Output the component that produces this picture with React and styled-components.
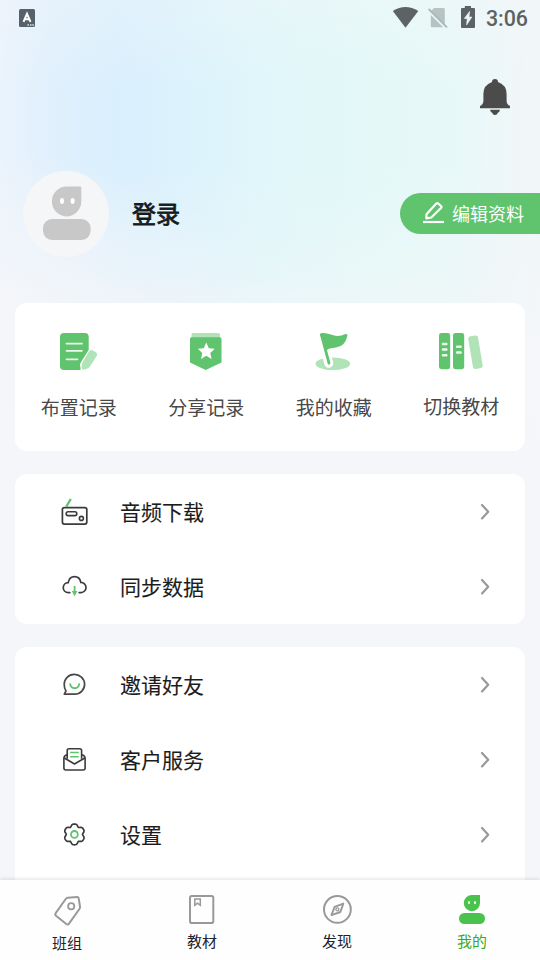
import React from "react";
import styled, { createGlobalStyle } from "styled-components";

const GlobalStyle = createGlobalStyle`
	* {
		box-sizing: border-box;
	}
	body {
		margin: 0;
		background: #f5f6f9;
		font-family: "Noto Sans CJK SC", sans-serif;
	}
	svg {
		display: block;
		flex-shrink: 0;
	}
`;

const Screen = styled.div`
	width: 540px;
	height: 960px;
	display: flex;
	flex-direction: column;
	overflow: hidden;
	background:
		radial-gradient(ellipse 260px 170px at 0 320px, rgba(245, 246, 249, 0.9), rgba(245, 246, 249, 0)),
		linear-gradient(
			to bottom,
			rgba(245, 246, 249, 0.3) 0,
			rgba(245, 246, 249, 0) 90px,
			rgba(245, 246, 249, 0) 160px,
			rgba(245, 246, 249, 0.3) 270px,
			rgba(245, 246, 249, 0.8) 340px,
			#f5f6f9 450px
		),
		linear-gradient(to right, #eaf3fc 0, #e0f0fc 50px, #d9effd 120px, #dcf2fc 185px, #e0f6fa 265px, #e3f8f7 360px, #e8f8f8 460px, #f2f6f9 540px);
`;

const StatusBar = styled.header`
	height: 36px;
	flex-shrink: 0;
	display: flex;
	align-items: center;
	justify-content: space-between;
	padding: 0 12px 0 19px;
`;

const StatusIcons = styled.div`
	display: flex;
	align-items: center;

	svg {
		margin-bottom: 2px;
	}
`;

const Clock = styled.span`
	margin-left: 10px;
	font: 500 21.4px/36px Roboto, sans-serif;
	color: #5b6263;
	padding-top: 2px;
`;

const Notifications = styled.div`
	display: flex;
	justify-content: flex-end;
	padding: 42px 29px 0 0;
	height: 135px;
	flex-shrink: 0;
`;

const Profile = styled.section`
	display: flex;
	align-items: center;
	height: 86px;
	flex-shrink: 0;
	padding-left: 23px;
`;

const Name = styled.h1`
	margin: 0 0 2px 23px;
	flex: 1;
	font-size: 24px;
	line-height: 36px;
	font-weight: 400;
	color: #161b1d;
	-webkit-text-stroke: 0.8px #161b1d;
`;

const EditButton = styled.button`
	display: flex;
	align-items: center;
	gap: 7px;
	width: 140px;
	height: 41px;
	margin: 0 0 1px;
	padding: 0 0 1px 22px;
	border: 0;
	border-radius: 21px 0 0 21px;
	background: #60c36d;
	color: #fff;
	font-family: inherit;
	font-size: 18px;
	line-height: 26px;
	white-space: nowrap;
`;

const Main = styled.main`
	flex: 1;
	min-height: 0;
	overflow: hidden;
	display: flex;
	flex-direction: column;
	gap: 23px;
	padding: 46px 15px 0;
`;

const Card = styled.section`
	flex-shrink: 0;
	background: #fff;
	border-radius: 12px;

	&:last-child {
		padding-bottom: 30px;
	}
`;

const Shortcuts = styled(Card)`
	display: grid;
	grid-template-columns: repeat(4, 1fr);
	height: 148px;
	padding-top: 28px;
`;

const Shortcut = styled.div`
	display: flex;
	flex-direction: column;
	align-items: center;
	gap: ${({ $gap }) => $gap || 22}px;
	font-size: 19px;
	line-height: 28px;
	color: #484848;
`;

const Row = styled.div`
	display: flex;
	align-items: center;
	height: 75px;
	padding: 0 34px 0 45px;
`;

const RowLabel = styled.span`
	flex: 1;
	margin-left: 30px;
	padding-bottom: 1px;
	font-size: 21px;
	line-height: 30px;
	color: #1c1c1c;
	-webkit-text-stroke: 0.1px #1c1c1c;
`;

const TabBar = styled.nav`
	position: relative;
	display: grid;
	grid-template-columns: repeat(4, 1fr);
	height: 80px;
	flex-shrink: 0;
	padding-top: 14px;
	background: #fefefe;
	box-shadow: 0 -1px 4px rgba(0, 0, 0, 0.12);
`;

const Tab = styled.div`
	display: flex;
	flex-direction: column;
	align-items: center;
	gap: ${({ $gap }) => $gap || 4}px;
	color: ${({ $active }) => ($active ? "#3bab14" : "#20222c")};
`;

const TabLabel = styled.span`
	margin-right: 1px;
	font-size: 15px;
	line-height: 22px;
`;

const GREEN = "#60c36d";
const PALE = "#b0e3b8";
const INK = "#3b3b3b";

const KeyboardIcon = () => (
	<svg width="16" height="18" viewBox="0 0 16 18">
		<rect width="16" height="18" rx="1.5" fill="#56626a" />
		<path d="M4.5 12.8L8 4.8L11.5 12.8M5.8 10.3H10.2" fill="none" stroke="#fff" strokeWidth="2" />
		<path d="M8.5 16H10M11 16H12.5M13.3 16H14.8" stroke="#dfe5e8" strokeWidth="1.3" />
	</svg>
);

const SignalIcons = () => (
	<svg width="84" height="24" viewBox="392 5 84 24">
		<path d="M392.8 11Q405.5 3.2 418.3 11L405.5 27.8Z" fill="#5c6364" />
		<path d="M434 8H443.5Q444.8 8 444.8 9.3V27.2H432Q430.8 27.2 430.8 26V11.5Z" fill="#b7c3c3" />
		<path d="M427.8 10.5L445.8 28.5" stroke="#e8f7f7" strokeWidth="2" />
		<path d="M428.6 9L447 27.4" stroke="#adb8b8" strokeWidth="1.8" />
		<path d="M464.8 6H471V8H474Q475 8 475 9V27Q475 28 474 28H462Q461 28 461 27V9Q461 8 462 8H464.8Z" fill="#5c6364" />
		<path d="M469.6 11.5L464.3 18.5H467.2L466.6 25L471.9 17H469Z" fill="#eef7f7" stroke="#eef7f7" strokeWidth="0.6" />
	</svg>
);

const BellIcon = () => (
	<svg width="32" height="38" viewBox="479 78 32 38">
		<path
			d="M492 82Q492 79 495 79Q498 79 498 82Q506.6 85 506.6 94V101Q506.8 104.5 510 106V108.2H480V106Q483.2 104.5 483.4 101V94Q483.4 85 492 82Z"
			fill="#4b4b4b"
		/>
		<path d="M490 109.8H500Q499.4 112.6 497.8 112.8Q497.3 115 495 115Q492.7 115 492.2 112.8Q490.6 112.6 490 109.8Z" fill="#4b4b4b" />
	</svg>
);

const AvatarIcon = () => (
	<svg width="86" height="86" viewBox="23 171 86 86">
		<circle cx="66" cy="214" r="43" fill="#f5f6f8" />
		<path d="M66.7 186.4H80.3Q81.3 186.4 81.3 187.4V201.8A14.7 15 0 1 1 66.7 186.4Z" fill="#c8c8c8" />
		<ellipse cx="62" cy="201" rx="2" ry="3" fill="#fff" />
		<ellipse cx="72.6" cy="201" rx="2" ry="3" fill="#fff" />
		<rect x="43" y="219" width="47.6" height="21" rx="9" fill="#c8c8c8" />
	</svg>
);

const PencilIcon = () => (
	<svg width="23" height="24" viewBox="422 200 23 24" fill="none" stroke="#fff">
		<path d="M426.5 213.3L436.3 202.5Q437.2 201.6 438.2 202.5L441 205Q442 206 441 207L431.3 216.5L426.4 217.3Z" strokeWidth="2.2" strokeLinejoin="round" />
		<path d="M423 221H444" strokeWidth="2.2" />
	</svg>
);

const AssignIcon = () => (
	<svg width="46" height="40" viewBox="56 331 46 40">
		<path d="M64 333H85Q88.7 333 88.7 337V350L80.5 364V370H64Q60 370 60 366V337Q60 333 64 333Z" fill={GREEN} />
		<path d="M66.5 343.7H82M66.5 350.8H82M66.5 359.3H77.5" stroke="#eefaf0" strokeWidth="1.7" strokeLinecap="round" />
		<path d="M92.6 354L85.4 365" stroke="#fff" strokeWidth="10.5" strokeLinecap="round" />
		<path d="M88.8 351.8Q90.3 349.3 92.8 350.5L96 352.3Q98 353.8 96.7 356L89.5 367Q88.5 368.5 83.5 369.8Q81.5 369.8 81.6 367.6Q81.8 363.5 82.8 361.8Z" fill={PALE} />
	</svg>
);

const ShareIcon = () => (
	<svg width="46" height="40" viewBox="183 331 46 40">
		<path d="M193 333H218.5Q220 333 220 335V340H191.5V335Q191.5 333 193 333Z" fill={PALE} />
		<path d="M191.5 337.3H220Q221.5 337.3 221.5 339V362.5L205.7 370L190 362.5V339Q190 337.3 191.5 337.3Z" fill={GREEN} />
		<path
			d="M206.3 342.6L208.8 348.2L214.8 348.8L210.3 352.9L211.6 358.9L206.3 355.8L201 358.9L202.3 352.9L197.8 348.8L203.8 348.2Z"
			fill="#fff"
		/>
	</svg>
);

const FlagIcon = () => (
	<svg width="46" height="40" viewBox="311 331 46 40">
		<ellipse cx="332.8" cy="363.7" rx="17.3" ry="6.3" fill={PALE} />
		<path d="M326.5 355L328.8 363.3" stroke="#fff" strokeWidth="9" strokeLinecap="round" />
		<path d="M321.5 335L329 363.2" stroke={GREEN} strokeWidth="2.8" strokeLinecap="round" />
		<path d="M320 334.5Q319.8 333 322 333Q326 332.6 331 334.5Q338 337.5 345.5 334Q347.8 333.5 347.3 336Q345.5 344 340 346.3Q336 348 331 348.3Q326.5 349 326.3 352Z" fill={GREEN} />
	</svg>
);

const BooksIcon = () => (
	<svg width="46" height="40" viewBox="438 331 46 40">
		<rect x="439" y="333" width="11.2" height="36.2" rx="2.4" fill={GREEN} />
		<rect x="453" y="333" width="11.2" height="36.2" rx="2.4" fill={GREEN} />
		<path d="M443 344H446.3M443 349.5H446.3M443 355.3H446.3M457.2 346.8H460.6M457.2 352.5H460.6" stroke="#f0fbf2" strokeWidth="2.6" strokeLinecap="round" />
		<path d="M470 336.3L475.5 335.5Q477.6 335.3 478 337.3L482.7 365.5Q482.8 367.5 481 368L475.5 369Q473.5 369.2 473 367.2L468.3 339Q468 336.8 470 336.3Z" fill={PALE} />
	</svg>
);

const RadioIcon = () => (
	<svg width="30" height="33" viewBox="60 495 30 33" fill="none" stroke={INK} strokeWidth="1.7">
		<path d="M70.8 499L66.3 506.5" stroke={GREEN} strokeWidth="2.4" />
		<rect x="62.4" y="507.6" width="24.4" height="16.5" rx="2" />
		<rect x="66.2" y="511.8" width="10.6" height="3.8" rx="1.9" strokeWidth="1.6" />
		<circle cx="81.4" cy="518.4" r="2" strokeWidth="1.6" />
	</svg>
);

const CloudIcon = () => (
	<svg width="30" height="33" viewBox="60 570 30 33" fill="none" stroke={INK} strokeWidth="1.7">
		<path d="M69.8 592.6H68.3A5 5 0 0 1 68.2 582.6Q69.3 576.7 74.5 576.7Q79.7 576.7 80.8 582.4A5.1 5.1 0 0 1 81 592.6H79.2" strokeLinecap="round" />
		<path d="M74.6 586V592" stroke={GREEN} strokeWidth="1.8" />
		<path d="M71.8 591H77.4L74.6 596.2Z" fill={GREEN} stroke="none" />
	</svg>
);

const ChatIcon = () => (
	<svg width="30" height="33" viewBox="60 668 30 33" fill="none" stroke="#4d4848" strokeWidth="1.7">
		<path d="M64.3 694.2H74.8A10.2 9.9 0 1 0 64.2 684.4Q64.2 688 66 691Z" strokeLinejoin="round" />
		<path d="M70.2 684.2Q70.8 688.2 74.7 688.2Q78.6 688.2 79.2 684.2" stroke={GREEN} strokeWidth="1.9" strokeLinecap="round" />
	</svg>
);

const MailIcon = () => (
	<svg width="30" height="33" viewBox="60 743 30 33" fill="none" stroke={INK} strokeWidth="1.6" strokeLinejoin="round">
		<path d="M67.2 758.8V750.8Q67.2 748.8 69 748.8H79.8Q81.6 748.8 81.6 750.8V758.8" />
		<path d="M67 754.8Q64.2 755.5 63.9 758.2V768Q63.9 770 66 770H83Q85.1 770 85.1 768V758.2Q84.8 755.5 82 754.8" />
		<path d="M64.3 758L74.5 764L84.8 758" />
		<path d="M70.2 752.5H78.8M70.2 756.7H78.8" stroke={GREEN} strokeWidth="1.6" />
	</svg>
);

// six broad teeth with narrow notches, one pointing straight up
const gearPoints = Array.from({ length: 72 }, (_, i) => {
	const angle = (i / 72) * Math.PI * 2;
	const notch = (1 - Math.cos(6 * angle)) / 2;
	const radius = 10.4 - 2.3 * notch ** 2;
	return `${(74.4 + radius * Math.sin(angle)).toFixed(2)},${(834.4 - radius * Math.cos(angle)).toFixed(2)}`;
}).join(" ");

const GearIcon = () => (
	<svg width="30" height="33" viewBox="60 818 30 33" fill="none" stroke={INK} strokeWidth="1.7" strokeLinejoin="round">
		<polygon points={gearPoints} />
		<circle cx="74.4" cy="834.4" r="3.4" stroke={GREEN} strokeWidth="1.8" />
	</svg>
);

const ChevronIcon = () => (
	<svg width="12" height="18" viewBox="0 0 12 18" fill="none">
		<path d="M3 2L9.2 8.7L3 15.4" stroke="#999" strokeWidth="2.2" strokeLinecap="round" strokeLinejoin="round" />
	</svg>
);

const TagIcon = () => (
	<svg width="31" height="32" viewBox="52 894 31 32" fill="none" stroke="#999" strokeWidth="2">
		<path d="M67.8 897.7L77 896.9Q78.3 896.8 78.6 898L80 906.5Q80.2 907.8 79.4 909L69 923.6Q67.8 925.2 66.3 924L56 915.8Q54.7 914.6 55.7 913.2L65.7 899Q66.6 897.8 67.8 897.7Z" strokeLinejoin="round" />
		<circle cx="71.2" cy="906.3" r="3.1" strokeWidth="1.8" />
	</svg>
);

const BookIcon = () => (
	<svg width="31" height="32" viewBox="187 894 31 32" fill="none" stroke="#999">
		<rect x="190" y="896" width="23.3" height="27" rx="1.8" strokeWidth="2" />
		<path d="M194.8 899H200.3V905.3L197.5 903.2L194.8 905.3Z" strokeWidth="1.5" />
	</svg>
);

const CompassIcon = () => (
	<svg width="31" height="32" viewBox="322 894 31 32" fill="none" stroke="#999" strokeLinejoin="round">
		<circle cx="337.4" cy="909.4" r="13.4" strokeWidth="2" />
		<path d="M343.3 903.6L340.4 912L331.5 915.2L334.6 906.8Z" strokeWidth="1.9" />
		<circle cx="337.4" cy="909.4" r="1.5" strokeWidth="1.3" />
	</svg>
);

const MeIcon = () => (
	<svg width="31" height="32" viewBox="457 894 31 32">
		<path d="M472 895H480V903A8.1 8.1 0 1 1 472 895Z" fill="#4ac24e" />
		<ellipse cx="469" cy="902.6" rx="1" ry="1.6" fill="#fff" />
		<ellipse cx="475" cy="902.6" rx="1" ry="1.6" fill="#fff" />
		<rect x="459" y="913" width="26" height="11" rx="5.3" fill="#4ac24e" />
	</svg>
);

const shortcuts = [
	{ label: "布置记录", Icon: AssignIcon },
	{ label: "分享记录", Icon: ShareIcon },
	{ label: "我的收藏", Icon: FlagIcon },
	{ label: "切换教材", Icon: BooksIcon, gap: 21 },
];

const groups = [
	[
		{ label: "音频下载", Icon: RadioIcon },
		{ label: "同步数据", Icon: CloudIcon },
	],
	[
		{ label: "邀请好友", Icon: ChatIcon },
		{ label: "客户服务", Icon: MailIcon },
		{ label: "设置", Icon: GearIcon },
	],
];

const tabs = [
	{ label: "班组", Icon: TagIcon, gap: 6 },
	{ label: "教材", Icon: BookIcon },
	{ label: "发现", Icon: CompassIcon },
	{ label: "我的", Icon: MeIcon, active: true },
];

const App = () => {
	return (
		<>
			<GlobalStyle />
			<Screen>
				<StatusBar>
					<KeyboardIcon />
					<StatusIcons>
						<SignalIcons />
						<Clock>3:06</Clock>
					</StatusIcons>
				</StatusBar>
				<Notifications>
					<BellIcon />
				</Notifications>
				<Profile>
					<AvatarIcon />
					<Name>登录</Name>
					<EditButton type="button">
						<PencilIcon />
						编辑资料
					</EditButton>
				</Profile>
				<Main>
					<Shortcuts>
						{shortcuts.map(({ label, Icon, gap }) => (
							<Shortcut key={label} $gap={gap}>
								<Icon />
								{label}
							</Shortcut>
						))}
					</Shortcuts>
					{groups.map((rows) => (
						<Card key={rows[0].label}>
							{rows.map(({ label, Icon }) => (
								<Row key={label}>
									<Icon />
									<RowLabel>{label}</RowLabel>
									<ChevronIcon />
								</Row>
							))}
						</Card>
					))}
				</Main>
				<TabBar>
					{tabs.map(({ label, Icon, gap, active }) => (
						<Tab key={label} $gap={gap} $active={active}>
							<Icon />
							<TabLabel>{label}</TabLabel>
						</Tab>
					))}
				</TabBar>
			</Screen>
		</>
	);
};

export default App;
